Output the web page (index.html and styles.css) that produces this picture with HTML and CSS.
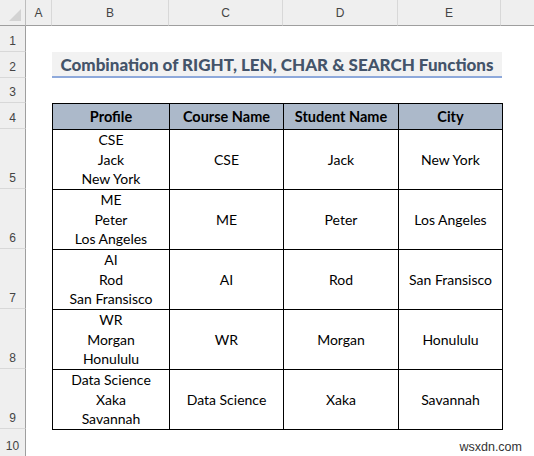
FILE: index.html
```html
<!DOCTYPE html>
<html>
<head>
<meta charset="utf-8">
<link rel="stylesheet" href="styles.css">
</head>
<body>
<div class="sheet">
  <div class="corner"><span class="tri"></span></div>
  <div class="colhead">A</div>
  <div class="colhead">B</div>
  <div class="colhead">C</div>
  <div class="colhead">D</div>
  <div class="colhead">E</div>
  <div class="colhead last"></div>

  <div class="rowhead r1">1</div>
  <div class="rowhead r2">2</div>
  <div class="rowhead r3">3</div>
  <div class="rowhead r4">4</div>
  <div class="rowhead r5">5</div>
  <div class="rowhead r6">6</div>
  <div class="rowhead r7">7</div>
  <div class="rowhead r8">8</div>
  <div class="rowhead r9">9</div>
  <div class="rowhead r10">10</div>

  <div class="title">Combination of RIGHT, LEN, CHAR &amp; SEARCH Functions</div>

  <table class="data">
    <colgroup>
      <col class="cb"><col class="cc"><col class="cd"><col class="ce">
    </colgroup>
    <thead>
      <tr><th>Profile</th><th>Course Name</th><th>Student Name</th><th>City</th></tr>
    </thead>
    <tbody>
      <tr><td class="multi">CSE<br>Jack<br>New York</td><td>CSE</td><td>Jack</td><td>New York</td></tr>
      <tr><td class="multi">ME<br>Peter<br>Los Angeles</td><td>ME</td><td>Peter</td><td>Los Angeles</td></tr>
      <tr><td class="multi">AI<br>Rod<br>San Fransisco</td><td>AI</td><td>Rod</td><td>San Fransisco</td></tr>
      <tr><td class="multi">WR<br>Morgan<br>Honululu</td><td>WR</td><td>Morgan</td><td>Honululu</td></tr>
      <tr><td class="multi">Data Science<br>Xaka<br>Savannah</td><td>Data Science</td><td>Xaka</td><td>Savannah</td></tr>
    </tbody>
  </table>
</div>
<div class="watermark">wsxdn.com</div>
</body>
</html>
```
FILE: styles.css
```css
html, body {
  margin: 0;
  padding: 0;
  background: #ffffff;
  width: 534px;
  height: 456px;
  overflow: hidden;
}
body {
  position: relative;
  font-family: Lato, "Open Sans", sans-serif;
}
.sheet {
  display: grid;
  grid-template-columns: 26px 26px 117px 114px 115px 103px 1fr;
  grid-template-rows: 26px 26px 26px 25px 26px repeat(5, 60px) 1fr;
  width: 534px;
  height: 456px;
}
.corner {
  grid-column: 1;
  grid-row: 1;
  background: #efefef;
  border-right: 1px solid #bdbdbd;
  border-bottom: 1px solid #9e9e9e;
  position: relative;
}
.tri {
  position: absolute;
  right: 4px;
  bottom: 4px;
  width: 0;
  height: 0;
  border-left: 12px solid transparent;
  border-bottom: 12px solid #d3d3d3;
}
.colhead {
  grid-row: 1;
  background: #efefef;
  border-right: 1px solid #d8d8d8;
  border-bottom: 1px solid #9e9e9e;
  color: #444;
  font-family: "Liberation Sans", Arial, sans-serif;
  font-size: 12px;
  display: flex;
  align-items: center;
  justify-content: center;
}
.colhead.last { border-right: none; }
.rowhead {
  grid-column: 1;
  background: #efefef;
  border-right: 1px solid #9e9e9e;
  border-bottom: 1px solid #d8d8d8;
  color: #444;
  font-family: "Liberation Sans", Arial, sans-serif;
  font-size: 12px;
  display: flex;
  align-items: flex-end;
  justify-content: center;
  padding-bottom: 3px;
  box-sizing: border-box;
}
.r1 { grid-row: 2; }
.r2 { grid-row: 3; }
.r3 { grid-row: 4; }
.r4 { grid-row: 5; }
.r5 { grid-row: 6; }
.r6 { grid-row: 7; }
.r7 { grid-row: 8; }
.r8 { grid-row: 9; }
.r9 { grid-row: 10; }
.r10 { grid-row: 11; border-bottom: none; }

.title {
  grid-column: 3 / 7;
  grid-row: 3;
  margin-right: -1px;
  background: #f2f2f2;
  border-bottom: 2px solid #8ea9db;
  color: #44546a;
  font-weight: 900;
  font-size: 17px;
  display: flex;
  align-items: center;
  justify-content: center;
  height: 26px;
  box-sizing: border-box;
  padding-top: 1px;
}

.data {
  grid-column: 3 / 7;
  grid-row: 5 / 11;
  align-self: start;
  border-collapse: collapse;
  width: 450px;
  table-layout: fixed;
  font-size: 14px;
  color: #000;
}
.cb { width: 117px; }
.cc { width: 114px; }
.cd { width: 115px; }
.ce { width: 104px; }
.data th, .data td {
  border: 1px solid #000;
  text-align: center;
  vertical-align: middle;
  padding: 0;
}
.data th {
  background: #acb9ca;
  font-weight: bold;
  font-size: 14.5px;
  line-height: 18px;
  height: 25px;
}
.data td {
  height: 59px;
  line-height: 19.5px;
}
.watermark {
  position: absolute;
  right: 12px;
  bottom: 2px;
  font-family: "Liberation Sans", Arial, sans-serif;
  font-size: 12.5px;
  color: #333;
}
```
